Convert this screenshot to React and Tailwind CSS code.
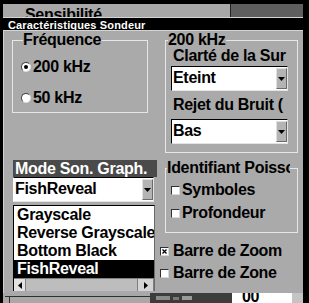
import React from 'react';

const font = "font-['Liberation_Sans',Arial,Helvetica,sans-serif]";

const DownArrow = () => (
  <svg width="7" height="4" viewBox="0 0 7 4">
    <path d="M0 0h7L3.5 4z" fill="#000" />
  </svg>
);

const Select = ({ value, className = '' }) => (
  <div className={`flex h-[25px] bg-white border border-t-black border-l-black border-r-[#e4e4e4] border-b-[#e4e4e4] ${className}`}>
    <div className="flex-1 pl-[1px] pt-[3px] whitespace-nowrap overflow-hidden">{value}</div>
    <div className="self-center h-[21px] w-[11px] flex items-center justify-center bg-[#b4b4b4] border border-t-[#e0e0e0] border-l-[#e0e0e0] border-r-[#6a6a6a] border-b-[#6a6a6a]">
      <DownArrow />
    </div>
  </div>
);

const Radio = ({ on }) => (
  <span className="w-[10px] h-[10px] rounded-full bg-white border border-t-[#404040] border-l-[#404040] border-r-[#e0e0e0] border-b-[#e0e0e0] flex items-center justify-center">
    {on && <span className="w-[4px] h-[4px] rounded-full bg-black" />}
  </span>
);

const Check = ({ on }) => (
  <span className="w-[9px] h-[9px] bg-white border border-t-[#303030] border-l-[#303030] border-r-[#d8d8d8] border-b-[#d8d8d8] flex items-center justify-center">
    {on && (
      <svg width="5" height="5" viewBox="0 0 5 5">
        <path d="M0.5 0.5l4 4M4.5 0.5l-4 4" stroke="#000" strokeWidth="1.3" />
      </svg>
    )}
  </span>
);

const modes = ['Grayscale', 'Reverse Grayscale', 'Bottom Black', 'FishReveal'];

export default function App() {
  return (
    <div className={`${font} w-[309px] h-[303px] bg-black pt-[4px] pl-[3px] pr-[6px] flex flex-col overflow-hidden text-[16px] leading-[16px] font-bold tracking-[-0.3px] text-black`}>
      {/* window behind the dialog */}
      <div className="h-[13px] flex bg-[#a8a8a8] overflow-hidden">
        <div className="flex-1 pl-[22px] pt-[3px] whitespace-nowrap">Sensibilité</div>
        <div className="w-[73px] bg-[#5e5e5e] border-l border-[#222]" />
      </div>
      <div className="h-[1px] bg-[#d4d4d4]" />

      {/* title bar */}
      <div className="h-[12px] bg-black text-white text-[11px] leading-[11px] tracking-[0.15px] pl-[5px] pt-[2px] overflow-hidden whitespace-nowrap">
        Caractéristiques Sondeur
      </div>
      <div className="h-[1px] bg-[#d4d4d4]" />

      {/* dialog body */}
      <div className="flex-1 flex bg-[#aaaaaa] border-l border-[#d0d0d0] pl-[8px]">
        <div className="w-[145px] flex flex-col">
          <fieldset className="mt-[1px] w-[136px] border border-[#e6e6e6] pl-[8px] pt-[11px] pb-[6px]">
            <legend className="ml-[2px]">Fréquence</legend>
            <div className="flex items-center gap-[2px]">
              <Radio on />
              <span>200 kHz</span>
            </div>
            <div className="flex items-center gap-[2px] mt-[15px]">
              <Radio />
              <span>50 kHz</span>
            </div>
          </fieldset>

          <div className="mt-[47px] ml-[1px] w-[144px] h-[17px] bg-[#4a4a4a] text-white pl-[2px] pt-[1px] whitespace-nowrap overflow-hidden">
            Mode Son. Graph.
          </div>
          <Select value="FishReveal" className="ml-[1px] w-[141px] border-l-white" />

          <div className="mt-[3px] ml-[1px] w-[142px] bg-white border-t border-l border-black border-r border-r-[#6a6a6a] flex flex-col">
            {modes.map(m => (
              <div
                key={m}
                className={`h-[18px] leading-[18px] pl-[3px] whitespace-nowrap overflow-hidden ${m === 'FishReveal' ? 'bg-black text-white' : ''}`}
              >
                {m}
              </div>
            ))}
            <div className="h-[13px] flex border-t border-[#808080] bg-[#c8c8c8]">
              <div className="w-[12px] flex items-center justify-center bg-[#e2e2e2] border-r border-[#808080]">
                <svg width="4" height="7" viewBox="0 0 4 7"><path d="M4 0v7L0 3.5z" fill="#000" /></svg>
              </div>
              <div className="flex-1 bg-[#bdbdbd]" />
              <div className="w-[17px] flex items-center justify-center bg-[#d4d4d4] border-l border-r border-[#808080]">
                <svg width="4" height="7" viewBox="0 0 4 7"><path d="M0 0v7L4 3.5z" fill="#000" /></svg>
              </div>
            </div>
          </div>
        </div>

        <div className="ml-[3px] w-[138px] flex flex-col">
          <fieldset className="mt-[1px] ml-[5px] w-[133px] border border-[#e6e6e6] pb-[8px]">
            <legend className="ml-[2px]">200 kHz</legend>
            <div className="ml-[7px] whitespace-nowrap">Clarté de la Sur</div>
            <Select value="Eteint" className="mt-[2px] ml-[5px] w-[117px]" />
            <div className="mt-[6px] ml-[7px] whitespace-nowrap">Rejet du Bruit (</div>
            <Select value="Bas" className="mt-[6px] ml-[5px] w-[117px]" />
          </fieldset>

          <fieldset className="mt-[7px] ml-[5px] w-[133px] border border-[#e6e6e6] pt-[6px] pb-[11px]">
            <legend className="ml-[1px] max-w-[123px] whitespace-nowrap overflow-hidden">Identifiant Poisson</legend>
            <div className="flex items-center gap-[2px] ml-[5px]">
              <Check />
              <span>Symboles</span>
            </div>
            <div className="flex items-center gap-[2px] ml-[5px] mt-[7px]">
              <Check />
              <span>Profondeur</span>
            </div>
          </fieldset>

          <div className="mt-[10px] flex items-center gap-[4px]">
            <Check on />
            <span className="whitespace-nowrap">Barre de Zoom</span>
          </div>
          <div className="mt-[6px] flex items-center gap-[4px]">
            <Check />
            <span className="whitespace-nowrap">Barre de Zone</span>
          </div>
        </div>
      </div>

      {/* bottom of the window behind */}
      <div className="h-[10px] flex overflow-hidden">
        <div className="w-[147px] bg-[#a8a8a8] pt-[3px]">
          <div className="border-t border-[#303030] h-full ml-[2px]">
            <div className="ml-[4px] w-[1px] h-full bg-[#303030]" />
          </div>
        </div>
        <div className="w-[82px] bg-[#3c3c3c] flex items-center gap-[3px] px-[6px]">
          <span className="w-[14px] h-[4px] bg-[#8a8a8a]" />
          <span className="w-[6px] h-[3px] bg-[#777]" />
          <span className="w-[10px] h-[4px] bg-[#9a9a9a]" />
        </div>
        <div className="w-[60px] bg-white pl-[10px] text-[16px] leading-[16px]">
          <span className="relative -top-[4px]">00</span>
        </div>
        <div className="flex-1 bg-[#c4c4c4]" />
      </div>
    </div>
  );
}
